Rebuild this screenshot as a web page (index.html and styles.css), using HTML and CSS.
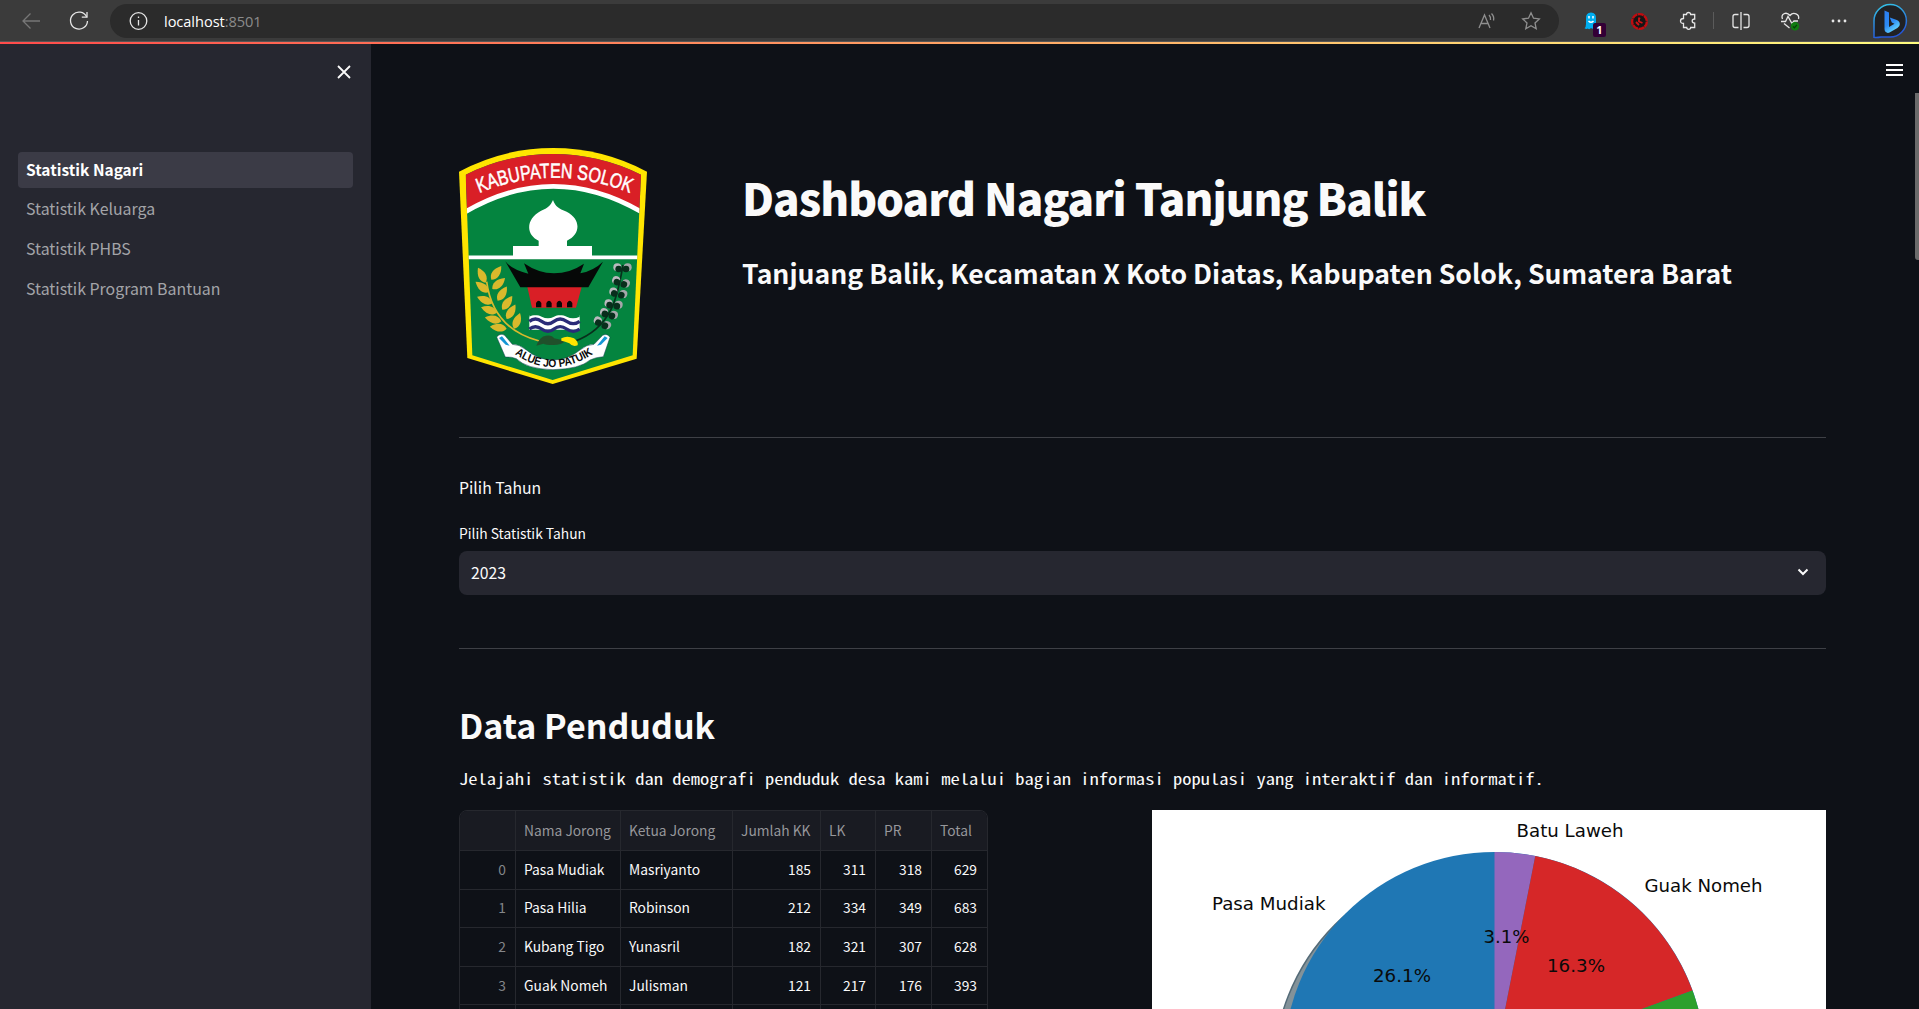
FILE: index.html
```html
<!DOCTYPE html>
<html lang="id">
<head>
<meta charset="utf-8">
<title>Dashboard Nagari Tanjung Balik</title>
<link rel="stylesheet" href="styles.css">
</head>
<body>
<header class="toolbar">
  <span class="tool back"><svg width="20" height="18" viewBox="0 0 20 18"><path d="M19 9H2M9.500 1.500L2 9l7.500 7.500"/></svg></span>
  <span class="tool reload"><svg width="22" height="22" viewBox="0 0 22 22"><path d="M18.700 7A8.500 8.500 0 1 0 19.500 11"/><path d="M19 2v5.200h-5.200"/></svg></span>
  <div class="address">
    <svg width="20" height="20" viewBox="0 0 20 20"><circle cx="10.500" cy="10" r="8.300"/><path d="M10.500 9v5.500M10.500 5.500v1.500"/></svg>
    <span class="url">localhost<i>:8501</i></span>
    <svg class="dim read" width="20" height="20" viewBox="0 0 20 20"><path d="M2 17L7.500 4L13 17M4 12.500h7M12 4q2 2 1.500 5M14.500 2.500q3 3 2 7"/></svg>
    <svg class="dim" width="20" height="20" viewBox="0 0 20 20"><path d="M10 1.800l2.500 5.400 5.800.7-4.300 4 1.200 5.900-5.200-3-5.200 3 1.200-5.900-4.300-4 5.800-.7z"/></svg>
  </div>
  <div class="extensions">
    <span class="tool ghost"><svg width="14" height="18" viewBox="0 0 14 18"><path d="M2 7Q1.500.5 7 .5T12 7v5q.5 3 1.500 4-2 .6-3.200-.8-1.300 2.400-3.300.8-1.600 2-3.200.5-1.300 1-3.300-.3Q2 15 2 12z" fill="#00aef0" stroke="none"/><path d="M5 4v2.500M9 4v2.500M4.500 9q2.500 2.500 5 0" stroke="#fff" stroke-width="1.500"/></svg><b class="badge">1</b></span>
    <span class="tool"><svg width="20" height="20" viewBox="0 0 20 20"><circle cx="9.500" cy="10.500" r="7.400" fill="#161616" stroke="#c00c10" stroke-width="2.400" stroke-dasharray="6 .6"/><path d="M9 6.500v4l3.500 1.500M6 11l3 3M9 7l1 1" stroke="#d01216" stroke-width="1.800"/></svg></span>
    <span class="tool"><svg width="20" height="20" viewBox="0 0 20 20"><path d="M4.500 3.500h3Q7.500 1.500 9.500 1.500t2.200 2h4v4.500q-2.500 0-2.500 2t2.500 2.200v4.300h-4q0 1.800-2 1.800t-2-1.800H4.500v-4Q1.500 12.500 1.500 10t3-2.500z"/></svg></span>
    <span class="divider"></span>
    <span class="tool"><svg width="20" height="20" viewBox="0 0 20 20"><path d="M10 1v18M7.500 3.500H4Q2 3.500 2 5.500v9q0 2 2 2h3.500M12.500 3.500H16q2 0 2 2v9q0 2-2 2h-3.500"/></svg></span>
    <span class="tool"><svg width="22" height="20" viewBox="0 0 22 20"><path d="M3.500 8Q2 4.500 5 2.800T11 4.500Q13.500 1.300 17 2.800T19.500 8M2 10.500h4.500l2.500-5 4 7 2-2.500h4M5 12.500l5.500 4.500"/><circle cx="16" cy="15.300" r="4.200" fill="#107c10" stroke="none"/><path d="M14 15.500l1.400 1.300 2.500-3" stroke="#063f08"/></svg></span>
    <span class="tool dots"><svg width="16" height="4" viewBox="0 0 16 4"><circle cx="2" cy="2" r="1.400"/><circle cx="8" cy="2" r="1.400"/><circle cx="14" cy="2" r="1.400"/></svg></span>
    <span class="bing"><svg width="36" height="36" viewBox="0 0 36 36">
      <defs><linearGradient id="ring" x1="0" y1="0" x2=".3" y2="1"><stop offset="0" stop-color="#35c9e6"/><stop offset="1" stop-color="#2456d8"/></linearGradient><linearGradient id="b" x1="0" y1="0" x2=".5" y2="1"><stop offset="0" stop-color="#2b7cf0"/><stop offset=".6" stop-color="#2d8bf5"/><stop offset="1" stop-color="#63d5ff"/></linearGradient></defs>
      <path d="M2 34.300V18A16.200 16.200 0 1 1 18.200 34H9Q4.500 34.800 2 34.300z" fill="#202124" stroke="url(#ring)" stroke-width="1.500"/>
      <path d="M12.500 7.500l4.500 2v14.500l5.500-3.300-2.700-1.200-2-5 7 2.500q3 1.200 3 4.200 0 2.500-2.400 3.900l-7.400 4.200q-2.500 1.300-4.300-.2-1.200-1-1.200-3.100z" fill="url(#b)" stroke="none"/></svg></span>
  </div>
</header>
<div class="decoration"></div>
<div class="app">
  <aside class="sidebar">
    <svg class="close" width="14" height="14" viewBox="0 0 14 14"><path d="M1 1l12 12M13 1L1 13"/></svg>
    <nav class="nav">
      <a class="active">Statistik Nagari</a>
      <a>Statistik Keluarga</a>
      <a>Statistik PHBS</a>
      <a>Statistik Program Bantuan</a>
    </nav>
  </aside>
  <main class="main">
    <svg class="menu" width="17" height="12" viewBox="0 0 17 12"><path d="M0 1h17M0 6h17M0 11h17"/></svg>
    <div class="scroll"></div>
    <section class="hero">
      <svg class="emblem" width="188" height="236" viewBox="57 54 564 708">
        <defs>
          <path id="top-arc" d="M118 189Q340 98 570 189"/>
          <path id="motto-arc" d="M224 672Q338 752 462 670"/>
          <path id="leaf" d="M0 0C-16-8-20-26-8-50C10-34 14-14 0 0z"/>
          <g id="boll"><circle cx="-15" cy="-2" r="12" fill="#b9b9bd"/><circle cx="16" cy="-2" r="12" fill="#a5a7aa"/><circle cx="-11" cy="3" r="10" fill="#082e1c"/><circle cx="11" cy="3" r="10" fill="#082e1c"/></g>
          <clipPath id="shield"><path d="M77 134Q200 72 339 72T603 134L578 676 338 750 97 676z"/></clipPath>
        </defs>
        <path d="M57 125Q190 54 339 54T621 125L590 686 338 762 82 684z" fill="#ffe500"/>
        <g clip-path="url(#shield)">
          <path d="M57 54h564v708H57z" fill="#04843f"/>
          <path d="M57 54h564v205Q470 168 340 168T57 259z" fill="#d91f26"/>
          <path d="M70 249Q205 169 340 169T610 249" fill="none" stroke="#fff" stroke-width="14"/>
          <path d="M60 382h560" stroke="#fff" stroke-width="11"/>
        </g>
        <path d="M339 210C346 229 355 236 380 245C425 268 421 315 381 332V348H456V382H219V348H296V332C257 315 257 267 302 243C325 234 332 225 339 210z" fill="#fff"/>
        <path d="M262 471H425L408 533H276z" fill="#d91f26"/>
        <path d="M196 394Q214 418 265 431L252 400Q295 430 342 430T432 401L421 430Q461 422 489 395L445 472H241z" fill="#060807"/>
        <g fill="#060807"><path d="M288 532v-13q8-14 16 0v13zM319 532v-13q8-14 16 0v13zM350 532v-13q8-14 16 0v13zM381 532v-13q8-14 16 0v13z"/></g>
        <path d="M268 556h151v43H268z" fill="#fff"/>
        <g fill="none" stroke="#2a2b78" stroke-width="10"><path d="M268 574q18-14 37 0t37 0 38 0 39 0M268 597q18-14 37 0t37 0 38 0 39 0"/></g>
        <path d="M268 553h151v7q-20 10-39 0-20-11-38 0-18 10-37 0-19-11-37 0z" fill="#04843f"/>
        <g fill="none" stroke="#d9b92c" stroke-width="5"><path d="M140 455C150 530 190 605 298 633"/></g>
        <g fill="#d9b92c">
          <use href="#leaf" transform="translate(137 458) rotate(-18)"/><use href="#leaf" transform="translate(154 449) rotate(45)"/>
          <use href="#leaf" transform="translate(146 487) rotate(-42)"/><use href="#leaf" transform="translate(157 477) rotate(58)"/>
          <use href="#leaf" transform="translate(158 520) rotate(-58)"/><use href="#leaf" transform="translate(173 512) rotate(42)"/>
          <use href="#leaf" transform="translate(171 548) rotate(-62)"/><use href="#leaf" transform="translate(187 539) rotate(45)"/>
          <use href="#leaf" transform="translate(184 574) rotate(-68)"/><use href="#leaf" transform="translate(200 567) rotate(40)"/>
          <use href="#leaf" transform="translate(200 596) rotate(-74)"/><use href="#leaf" transform="translate(222 596) rotate(30)"/>
        </g>
        <path d="M549 405C534 490 520 592 404 634" fill="none" stroke="#082e1c" stroke-width="5"/>
        <use href="#boll" transform="translate(547 414)"/><use href="#boll" transform="translate(542 457) rotate(18)"/><use href="#boll" transform="translate(534 490) rotate(14)"/><use href="#boll" transform="translate(520 524) rotate(8)"/><use href="#boll" transform="translate(506 552) rotate(16)"/><use href="#boll" transform="translate(486 580) rotate(26)"/>
        <path d="M289 647Q300 618 318 617Q336 614 342 625L376 632Q365 645 340 645T310 641z" fill="#20502b"/>
        <path d="M364 625Q381 615 402 625Q416 636 413 646Q398 652 388 640 375 634 364 632z" fill="#ffe500"/>
        <path d="M170 621Q181 608 194 616L217 643Q238 643 258 659 295 690 339 690T420 660Q440 643 462 643L488 616Q502 609 510 622L490 680Q465 682 450 690 420 717 339 719 260 717 229 686 215 680 196 681z" fill="#fff" stroke="#123b50" stroke-width="1.500"/>
        <path d="M177 624l9-5 23 28-12-3zM503 624l-9-5-23 28 12-3z" fill="#1596d5"/>
        <text class="arms-name"><textPath href="#top-arc" textLength="464" lengthAdjust="spacingAndGlyphs">KABUPATEN SOLOK</textPath></text>
        <text class="arms-motto"><textPath href="#motto-arc" textLength="252" lengthAdjust="spacingAndGlyphs">ALUE JO PATUIK</textPath></text>
      </svg>
      <div class="heading">
        <h1>Dashboard Nagari Tanjung Balik</h1>
        <h3>Tanjuang Balik, Kecamatan X Koto Diatas, Kabupaten Solok, Sumatera Barat</h3>
      </div>
    </section>
    <hr>
    <section class="year">
      <p>Pilih Tahun</p>
      <label>Pilih Statistik Tahun</label>
      <div class="select"><span>2023</span><svg width="12" height="8" viewBox="0 0 12 8"><path d="M1.500 1.500L6 6l4.500-4.500"/></svg></div>
    </section>
    <hr>
    <h2>Data Penduduk</h2>
    <p class="mono">Jelajahi statistik dan demografi penduduk desa kami melalui bagian informasi populasi yang interaktif dan informatif.</p>
    <section class="data">
      <table>
        <colgroup><col class="c0"><col class="c1"><col class="c2"><col class="c3"><col class="c4"><col class="c5"><col class="c6"></colgroup>
        <thead><tr><th></th><th>Nama Jorong</th><th>Ketua Jorong</th><th>Jumlah KK</th><th>LK</th><th>PR</th><th>Total</th></tr></thead>
        <tbody>
          <tr><td>0</td><td>Pasa Mudiak</td><td>Masriyanto</td><td>185</td><td>311</td><td>318</td><td>629</td></tr>
          <tr><td>1</td><td>Pasa Hilia</td><td>Robinson</td><td>212</td><td>334</td><td>349</td><td>683</td></tr>
          <tr><td>2</td><td>Kubang Tigo</td><td>Yunasril</td><td>182</td><td>321</td><td>307</td><td>628</td></tr>
          <tr><td>3</td><td>Guak Nomeh</td><td>Julisman</td><td>121</td><td>217</td><td>176</td><td>393</td></tr>
          <tr><td></td><td></td><td></td><td></td><td></td><td></td><td></td></tr>
        </tbody>
      </table>
      <svg class="pie" width="674" height="505" viewBox="1152 810 674 505">
        <path d="M1152 810h674v505h-674z" fill="#fff"/>
        <circle cx="1484" cy="1073.500" r="210.500" fill="#839299" stroke="#546b78" stroke-width="1.500"/>
        <circle cx="1494.500" cy="1063" r="211" fill="#1f77b4"/>
        <path d="M1494.500 1063V852A211 211 0 0 1 1535.300 856z" fill="#9467bd"/>
        <path d="M1494.500 1063L1535.300 856A211 211 0 0 1 1692.500 990.500z" fill="#d62728"/>
        <path d="M1494.500 1063L1692.500 990.500A211 211 0 0 1 1640 1216z" fill="#2ca02c"/>
        <g class="pie-text">
          <text x="1516.500" y="836.500" textLength="107" lengthAdjust="spacingAndGlyphs">Batu Laweh</text>
          <text x="1644.500" y="891.500" textLength="118" lengthAdjust="spacingAndGlyphs">Guak Nomeh</text>
          <text x="1212" y="909.500" textLength="113.500" lengthAdjust="spacingAndGlyphs">Pasa Mudiak</text>
          <text x="1483.500" y="942.500" textLength="46" lengthAdjust="spacingAndGlyphs">3.1%</text>
          <text x="1547" y="971.500" textLength="58" lengthAdjust="spacingAndGlyphs">16.3%</text>
          <text x="1373" y="981.500" textLength="58" lengthAdjust="spacingAndGlyphs">26.1%</text>
        </g>
      </svg>
    </section>
  </main>
</div>
</body>
</html>
```
FILE: styles.css
```css
* { box-sizing: border-box; }
body {
  margin: 0;
  height: 1009px;
  overflow: hidden;
  display: flex;
  flex-direction: column;
  background: #0e1117;
  color: #fafafa;
  font-family: "Noto Sans CJK SC", "Noto Sans", sans-serif;
}
svg { display: block; flex: none; }

/* Browser toolbar */
.toolbar {
  flex: none;
  height: 42px;
  display: flex;
  align-items: flex-start;
  background: #3b3b3b;
  border-bottom: 1px solid #565656;
}
.toolbar svg { fill: none; stroke: #e6e6e6; stroke-width: 1.3; }
.tool { width: 49px; height: 41px; display: flex; align-items: center; justify-content: center; flex: none; }
.tool.back { width: 62px; }
.tool.back svg { stroke: #777; }
.tool.reload { width: 34px; }
.back + .reload { margin-right: 14px; }
.address {
  width: 1449px;
  height: 34px;
  margin-top: 4px;
  padding: 0 18px;
  display: flex;
  align-items: center;
  background: #2b2b2b;
  border-radius: 17px;
}
.url { margin-left: 16px; font: 14.6px/20px "Open Sans", sans-serif; color: #fff; letter-spacing: -0.05px; }
.url i { font-style: normal; color: #8b8b8b; }
.toolbar .dim { stroke: #8f8f8f; }
.read { margin-left: auto; margin-right: 24px; }
.extensions { display: flex; align-items: center; height: 41px; margin-left: 7px; }
.extensions .divider { width: 1px; height: 17px; margin-right: 2px; background: #5b5b5b; }
.ghost { position: relative; }
.badge {
  position: absolute;
  left: 27px;
  top: 23px;
  width: 13px;
  height: 14px;
  border-radius: 2px;
  background: #330036;
  color: #fff;
  font: bold 11px/14px "Open Sans", sans-serif;
  text-align: center;
}
.toolbar .dots svg { fill: #e6e6e6; stroke: none; }
.bing { margin-left: 9px; }
.decoration { flex: none; height: 2px; background: linear-gradient(90deg, #ff4b4b, #fffd80); }

/* App shell */
.app { flex: 1; min-height: 0; display: flex; }
.sidebar { width: 371px; flex: none; background: #262730; padding: 21px 18px 0; }
.close { margin: 0 2px 0 auto; fill: none; stroke: #fafafa; stroke-width: 1.8; }
.nav { margin-top: 73px; display: flex; flex-direction: column; gap: 4px; }
.nav a {
  height: 36px;
  padding-left: 8px;
  border-radius: 4px;
  font-size: 15.9px;
  line-height: 34px;
  color: #a3a4a8;
}
.nav .active { background: #3b3b46; color: #fff; font-size: 15.5px; font-weight: 700; }
.main { position: relative; flex: 1; padding: 104px 93px 0 88px; overflow: hidden; }
.menu { position: absolute; left: 1515px; top: 20px; stroke: #fff; stroke-width: 2; }
.scroll { position: absolute; right: 0; top: 49px; width: 4px; height: 167px; background: #6b6b6b; border-radius: 0 0 0 3px; }

.hero { display: flex; height: 236px; gap: 95px; }
.arms-name { font: 62px "Liberation Sans Narrow", "Liberation Sans", sans-serif; fill: #fff; stroke: #fff; stroke-width: 1.5; }
.arms-motto { font: bold 34px "Liberation Sans Narrow", "Liberation Sans", sans-serif; fill: #0a0a0a; }
h1, h2, h3, p { margin: 0; white-space: nowrap; }
h1 { margin-top: 19px; font-size: 44px; line-height: 60px; font-weight: 900; letter-spacing: -1px; }
h3 { margin-top: 28px; font-size: 26.6px; line-height: 36px; font-weight: 700; }
hr { margin: 53px 0 0; border: 0; height: 1px; background: #3e4046; }
.year { height: 157px; padding-top: 38px; }
.year + hr { margin-top: 53px; }
.year p { font-size: 15.8px; line-height: 24px; }
.year label { display: block; margin-top: 23px; font-size: 13.8px; line-height: 20px; }
.select {
  height: 44px;
  margin-top: 8px;
  padding: 0 17px 2px 12px;
  display: flex;
  align-items: center;
  justify-content: space-between;
  background: #262730;
  border-radius: 8px;
  font-size: 15.8px;
}
.select svg { fill: none; stroke: #fafafa; stroke-width: 2; }
h2 { margin-top: 51px; font-size: 34px; line-height: 50px; font-weight: 700; }
.mono {
  margin-top: 16px;
  width: 1000px;
  font: 15.2px/24px "Noto Sans Mono CJK SC", "DejaVu Sans Mono", monospace;
  transform: scaleX(1.221);
  transform-origin: left;
}

.data { display: flex; justify-content: space-between; margin-top: 20px; align-items: flex-start; }
table {
  width: 529px;
  table-layout: fixed;
  border-collapse: separate;
  border-spacing: 0;
  border: 1px solid #26282e;
  border-radius: 8px;
  overflow: hidden;
  font-size: 13.8px;
}
.c0 { width: 56px; } .c1 { width: 105px; } .c2 { width: 112px; } .c3 { width: 88px; } .c4 { width: 55px; } .c5 { width: 56px; } .c6 { width: 55px; }
th, td { padding: 0 9px 2px 8px; text-align: right; border-right: 1px solid #26282e; border-bottom: 1px solid #26282e; line-height: 20px; white-space: nowrap; }
th:last-child, td:last-child { border-right: 0; padding-right: 10px; }
th { height: 40px; background: #191b22; color: #96979b; font-weight: 400; text-align: left; }
td { height: 38.6px; }
td:first-child { color: #84868a; }
td:nth-child(2), td:nth-child(3) { text-align: left; }
.pie-text { font: 18.5px "DejaVu Sans", sans-serif; fill: #0a0a0a; }
```
